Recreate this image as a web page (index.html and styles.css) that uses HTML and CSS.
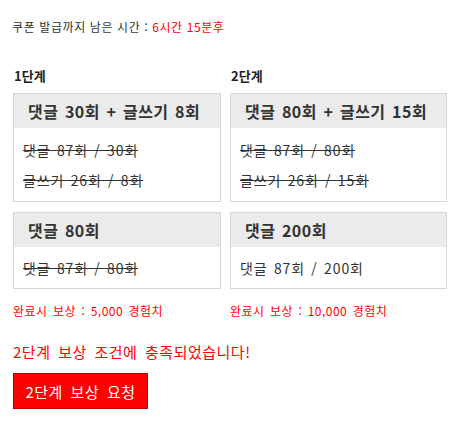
FILE: index.html
```html
<!DOCTYPE html>
<html lang="ko">
<head>
<meta charset="utf-8">
<link rel="stylesheet" href="styles.css">
</head>
<body>
<div class="page">
  <p class="timer">쿠폰 발급까지 남은 시간 : <span class="red">6시간 15분후</span></p>
  <div class="stages">
    <div class="stage stage-1">
      <div class="label">1단계</div>
      <div class="box">
        <div class="box-head">댓글 30회 + 글쓰기 8회</div>
        <div class="box-body">
          <div class="row done">댓글 87회 / 30회</div>
          <div class="row done">글쓰기 26회 / 8회</div>
        </div>
      </div>
      <div class="box">
        <div class="box-head">댓글 80회</div>
        <div class="box-body single">
          <div class="row done">댓글 87회 / 80회</div>
        </div>
      </div>
      <div class="reward">완료시 보상 : 5,000 경험치</div>
    </div>
    <div class="stage stage-2">
      <div class="label">2단계</div>
      <div class="box">
        <div class="box-head">댓글 80회 + 글쓰기 15회</div>
        <div class="box-body">
          <div class="row done">댓글 87회 / 80회</div>
          <div class="row done">글쓰기 26회 / 15회</div>
        </div>
      </div>
      <div class="box">
        <div class="box-head">댓글 200회</div>
        <div class="box-body single">
          <div class="row">댓글 87회 / 200회</div>
        </div>
      </div>
      <div class="reward">완료시 보상 : 10,000 경험치</div>
    </div>
  </div>
  <p class="message">2단계 보상 조건에 충족되었습니다!</p>
  <button class="claim" type="button">2단계 보상 요청</button>
</div>
</body>
</html>
```
FILE: styles.css
```css
html, body {
  margin: 0;
  padding: 0;
  background: #fff;
}
body {
  font-family: "Noto Sans CJK KR", "Noto Sans", sans-serif;
  color: #333;
}
.page {
  padding: 20px 13px 0 13px;
}
.timer {
  margin: 0 0 0 -1px;
  font-size: 12px;
  line-height: 14px;
  letter-spacing: 0.6px;
  color: #333;
}
.red {
  color: #ff0000;
}
.stages {
  display: grid;
  grid-template-columns: 208px 217px;
  column-gap: 9px;
  margin-top: 35px;
}
.stage {
  display: flex;
  flex-direction: column;
}
.label {
  font-size: 13px;
  line-height: 14px;
  font-weight: bold;
  color: #222;
  padding-left: 1px;
  margin-bottom: 10px;
}
.box {
  border: 1px solid #d6d6d6;
  margin-bottom: 10px;
}
.box-head {
  background: #ebebeb;
  height: 34px;
  line-height: 34px;
  padding-left: 14px;
  font-size: 16px;
  font-weight: bold;
  letter-spacing: 0.5px;
  word-spacing: 1.5px;
  color: #333;
  white-space: nowrap;
}
.box-body {
  padding: 7px 10px 6px 9px;
}
.box-body.single {
  padding: 6px 10px 5px 9px;
}
.row {
  font-size: 14px;
  line-height: 30px;
  letter-spacing: 0.9px;
  word-spacing: 1.5px;
  color: #333;
}
.row.done {
  text-decoration: line-through;
}
.reward {
  margin-top: 5px;
  font-size: 12px;
  line-height: 14px;
  letter-spacing: 0.5px;
  word-spacing: 1.5px;
  color: #ff0000;
}
.message {
  margin: 26px 0 0 0;
  font-size: 15px;
  line-height: 16px;
  letter-spacing: 0.5px;
  word-spacing: 3px;
  color: #ff0000;
}
.claim {
  display: block;
  margin-top: 13px;
  width: 135px;
  height: 36px;
  border: 1px solid #c00000;
  background: #ff0000;
  color: #fff;
  font-family: "Noto Sans CJK KR", "Noto Sans", sans-serif;
  font-size: 15px;
  letter-spacing: 0.5px;
  word-spacing: 3px;
  padding: 0;
  cursor: pointer;
}
```
